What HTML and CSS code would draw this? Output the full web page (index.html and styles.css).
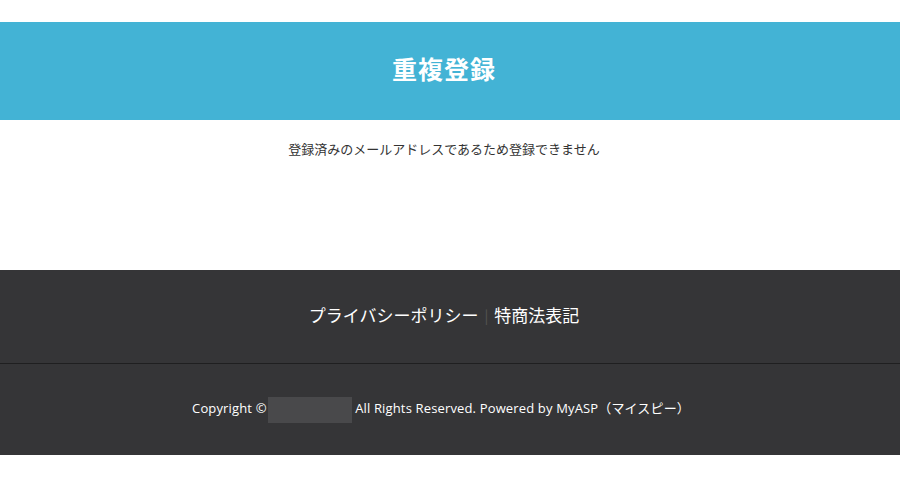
FILE: index.html
```html
<!DOCTYPE html>
<html lang="ja">
<head>
  <meta charset="UTF-8" />
  <title>重複登録</title>
  <link rel="stylesheet" href="styles.css">
</head>
<body>

  <div class="page">
    <header class="title-bar">
      <h1 class="title">重複登録</h1>
    </header>

    <main class="message">
      <p>登録済みのメールアドレスであるため登録できません</p>
    </main>

    <footer class="footer">
      <nav class="footer-links">
        <a href="#">プライバシーポリシー</a>
        <span class="sep">|</span>
        <a href="#">特商法表記</a>
      </nav>
      <div class="copyright">
        <p>Copyright ©<span class="masked"></span> All Rights Reserved. Powered by MyASP（マイスピー）</p>
      </div>
    </footer>
  </div>

</body>
</html>
```

FILE: styles.css
```css
* {
  margin: 0;
  padding: 0;
  box-sizing: border-box;
}

html, body {
  width: 100%;
  background: #fff;
  font-family: "Noto Sans CJK JP", "Noto Sans", sans-serif;
  color: #333;
}

.page {
  padding-top: 22px;
}

.title-bar {
  height: 98px;
  background-color: #43b3d5;
  display: flex;
  justify-content: center;
  align-items: center;
  padding: 0 12px 6px 0;
}

.title {
  font-size: 25px;
  font-weight: bold;
  color: #fff;
  letter-spacing: 1px;
}

.message {
  height: 150px;
  padding: 19px 12px 0 0;
  text-align: center;
  font-size: 13px;
  color: #333;
}

.footer {
  background-color: #353537;
  color: #fff;
}

.footer-links {
  height: 94px;
  display: flex;
  justify-content: center;
  align-items: center;
  gap: 6px;
  padding: 0 12px 4px 0;
  border-bottom: 1px solid #1f1f20;
  font-size: 17px;
}

.footer-links a {
  color: #fff;
  text-decoration: none;
}

.footer-links .sep {
  color: #555;
  font-size: 14px;
}

.copyright {
  height: 91px;
  display: flex;
  justify-content: center;
  align-items: center;
  padding: 1px 18px 0 0;
  font-family: "Open Sans", "Noto Sans CJK JP", sans-serif;
  font-size: 13px;
  letter-spacing: 0.15px;
}

.masked {
  display: inline-block;
  width: 84px;
  height: 26px;
  margin-left: 1px;
  background: #49494b;
  vertical-align: middle;
}
```
